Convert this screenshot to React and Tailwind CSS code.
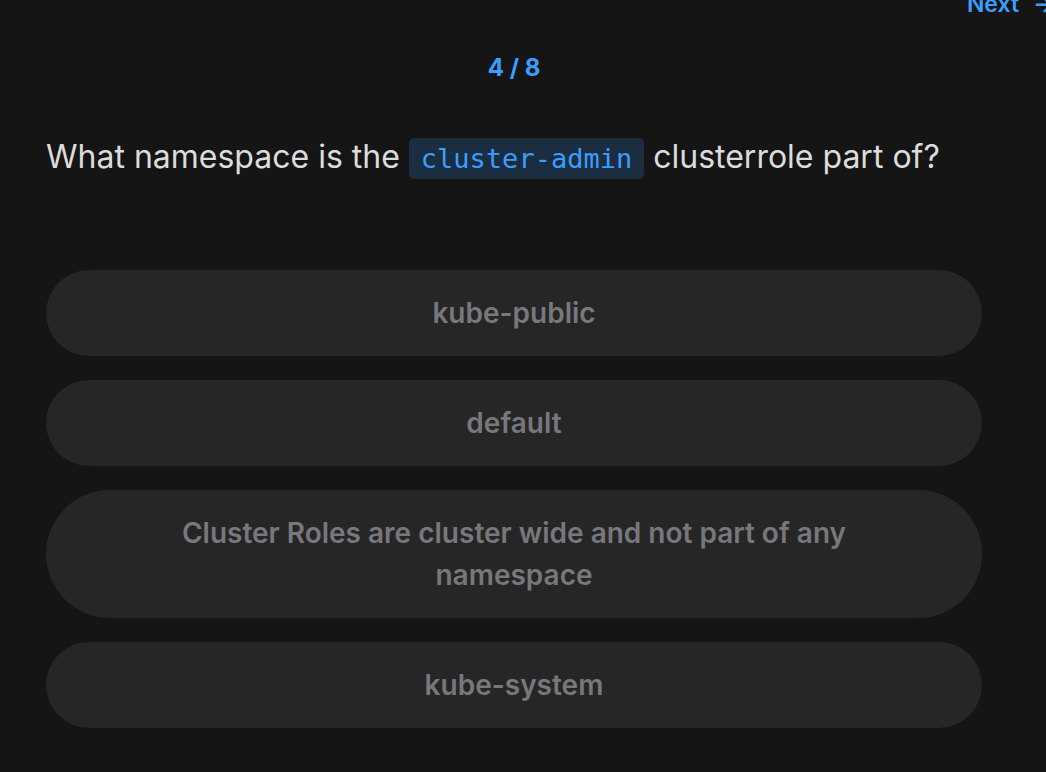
import React from 'react';

const options = [
    'kube-public',
    'default',
    'Cluster Roles are cluster wide and not part of any namespace',
    'kube-system',
];

const App = () => {
    return (
        <div className="min-h-screen w-full overflow-hidden bg-[#151515] font-['Inter',sans-serif]">
            <div className="flex justify-end h-[20px]">
                <a className="-mt-[12px] -mr-[9px] flex items-center gap-[14px] text-[23px] font-semibold text-[#3b9eff] whitespace-nowrap">
                    Next <span>→</span>
                </a>
            </div>
            <div className="pl-[46px] pr-[64px]">
                <div className="mt-[34px] text-center text-[24px] font-bold text-[#3b9eff] leading-[28px]">
                    4 / 8
                </div>
                <h2 className="mt-[51px] text-[32px] text-[#dcdcdc] leading-[48px]">
                    What namespace is the{' '}
                    <code className="rounded-[5px] bg-[#1b2d40] px-[12px] py-[5px] font-['DejaVu_Sans_Mono',monospace] text-[27px] text-[#3b9eff]">
                        cluster-admin
                    </code>{' '}
                    clusterrole part of?
                </h2>
                <div className="mt-[87px] flex flex-col gap-[24px]">
                    {options.map((opt) => (
                        <button
                            key={opt}
                            className="w-full rounded-full bg-[#262626] px-[120px] py-[22px] text-center text-[28px] font-semibold leading-[42px] text-[#78777c]"
                        >
                            {opt}
                        </button>
                    ))}
                </div>
            </div>
        </div>
    );
};

export default App;
